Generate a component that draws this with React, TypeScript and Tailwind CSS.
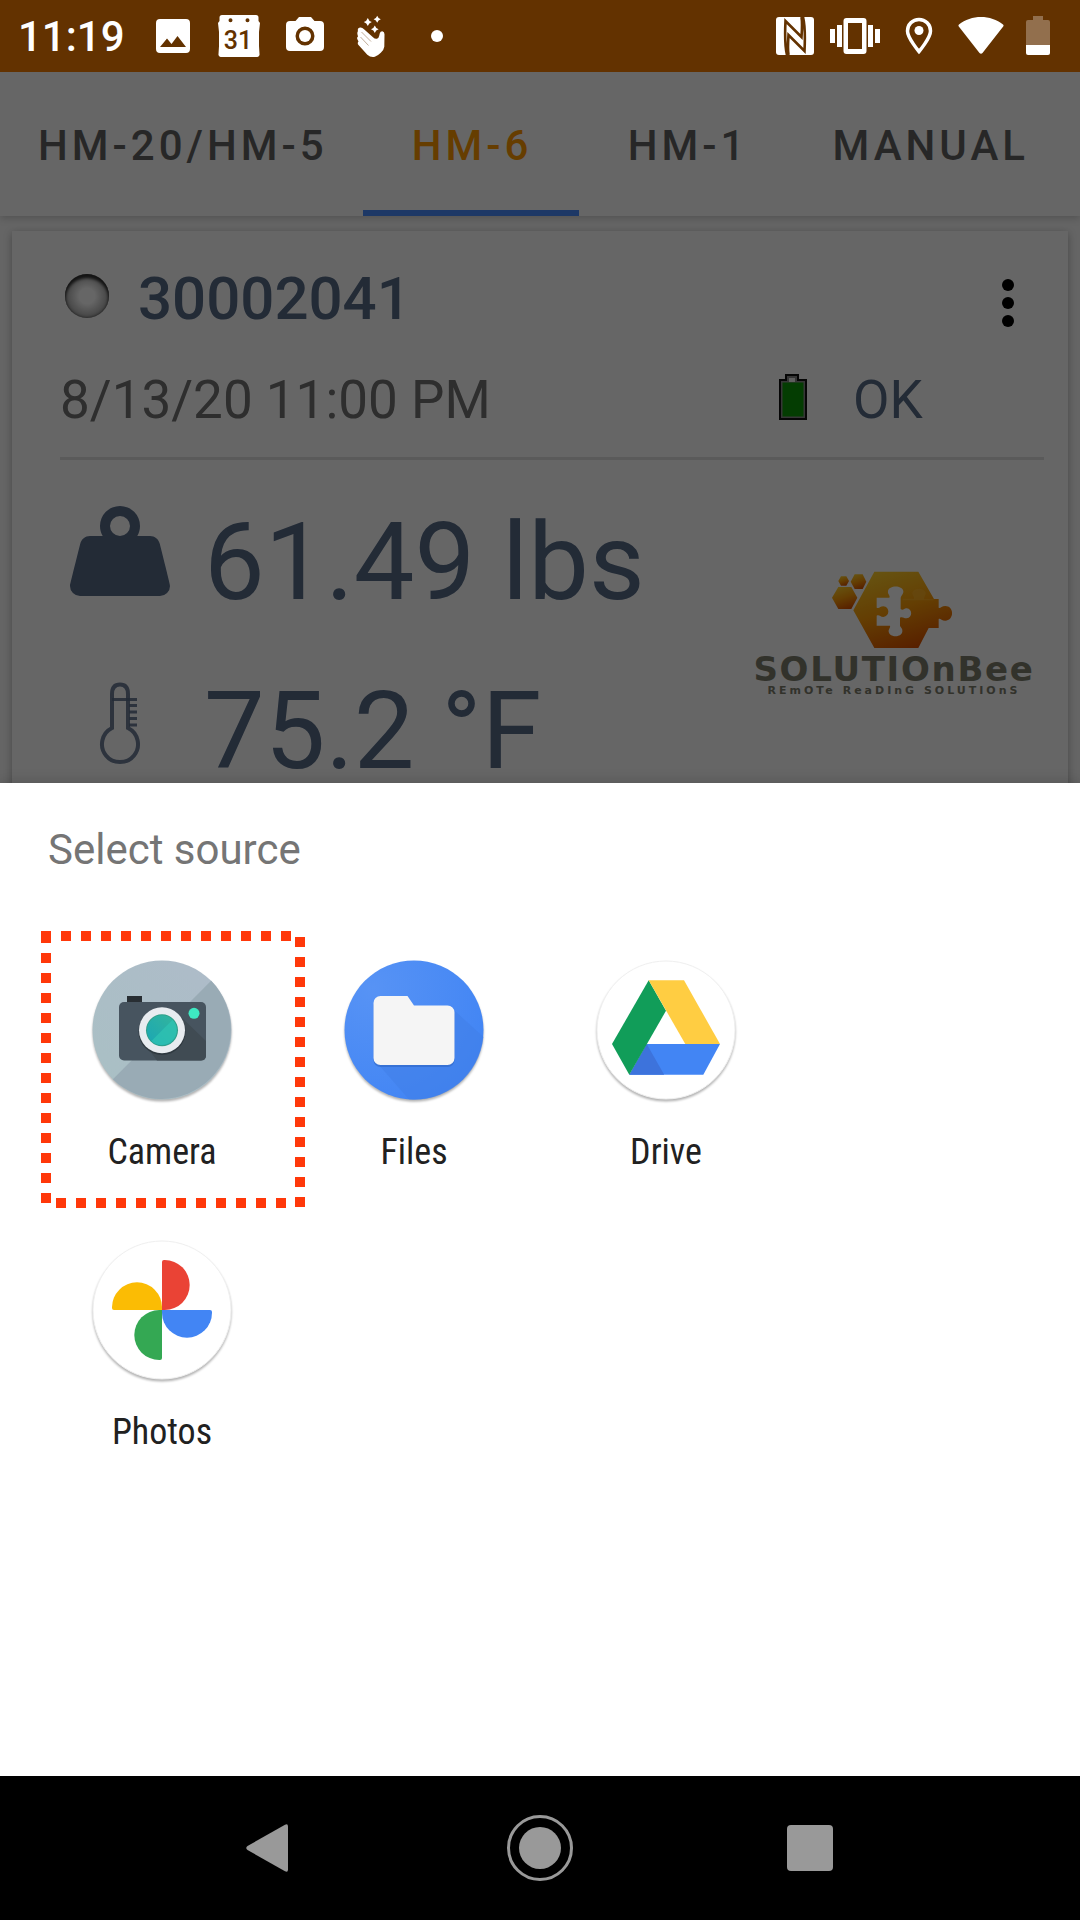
import React, { useState } from 'react'

const TABS = ['HM-20/HM-5', 'HM-6', 'HM-1', 'MANUAL']

const APPS = [
  { name: 'Camera', Icon: CameraAppIcon },
  { name: 'Files', Icon: FilesAppIcon },
  { name: 'Drive', Icon: DriveAppIcon },
  { name: 'Photos', Icon: PhotosAppIcon },
]

function StatusBar() {
  return (
    <header className="flex h-[72px] items-center justify-between bg-[#633200] pl-[18px] pr-[30px] text-white">
      <div className="flex items-center">
        <time className="w-[122px] pt-[2px] text-[42px] font-medium leading-none">11:19</time>
        <StatusSlot>
          <svg viewBox="0 0 34 34" className="size-[34px]" fill="currentColor">
            <path
              fillRule="evenodd"
              d="M4 0h26a4 4 0 0 1 4 4v26a4 4 0 0 1-4 4H4a4 4 0 0 1-4-4V4a4 4 0 0 1 4-4zM4 28h26l-8.500-11-6 8-4.500-5.500z"
            />
          </svg>
        </StatusSlot>
        <StatusSlot>
          <svg viewBox="0 0 42 42" className="size-[42px]">
            <path
              fill="currentColor"
              fillRule="evenodd"
              d="M4 0h34a2.500 2.500 0 0 1 2.500 2.500V6L42 8l-1 9v14l.5 8a2.500 2.500 0 0 1-2.500 3H3a2.500 2.500 0 0 1-2.500-3L1 31V17L0 8l1.500-2V2.500A2.500 2.500 0 0 1 4 0zM12.500 3.300a2 2 0 1 0 0 4 2 2 0 0 0 0-4zM29.500 3.300a2 2 0 1 0 0 4 2 2 0 0 0 0-4z"
            />
            <text x="20" y="34" textAnchor="middle" fontSize="25" fontWeight="500" fill="#633200">
              31
            </text>
          </svg>
        </StatusSlot>
        <StatusSlot>
          <svg viewBox="0 0 38 34" className="mb-1 h-[34px] w-[38px]" fill="currentColor">
            <path
              fillRule="evenodd"
              d="M13 0h12l3.500 4H34a4 4 0 0 1 4 4v22a4 4 0 0 1-4 4H4a4 4 0 0 1-4-4V8a4 4 0 0 1 4-4h5.500zM19 9.500a9.500 9.500 0 1 0 0 19 9.500 9.500 0 0 0 0-19z"
            />
            <circle cx="19" cy="19" r="6" />
          </svg>
        </StatusSlot>
        <StatusSlot>
          <svg viewBox="0 0 28 42" className="h-[42px] w-[28px]" fill="currentColor">
            <path d="M10.800 3q1 3.200 4 4-3 .8-4 4-1-3.200-4-4 3-.8 4-4zM20.200.8q.9 2.800 3.600 3.500-2.700.7-3.600 3.500-.9-2.800-3.600-3.500 2.700-.7 3.600-3.500zM17.800 10.500q1 3 3.800 3.800-2.800.8-3.800 3.800-1-3-3.800-3.800 2.800-.8 3.800-3.800z" />
            <path d="M1 16q-1-3 2-3.500 2.200-.3 4 1.700l9 8q2 2 4 1.500 1.800-.7 2.200-3l.6-2.500q.5-2 2.500-2 2.200.3 2.200 3l-.2 12.500q-.5 3.500-3.500 6-3 3-6 4-4 1-7.500-2L1.500 30q-1.500-2 0-3.500l-1-2q-1-2 .5-3l-.5-2q-.5-2 .5-3.500z" />
            <path d="M4.500 17l9.500 9.500M3.500 22l8 8.500" fill="none" stroke="#633200" strokeWidth="1" opacity=".4" />
          </svg>
        </StatusSlot>
        <StatusSlot>
          <span className="size-3 rounded-full bg-white" />
        </StatusSlot>
      </div>

      <div className="flex items-center gap-[22px]">
        <div className="flex items-center gap-4">
          <svg viewBox="0 0 38 38" className="size-[38px]">
            <rect width="38" height="38" rx="3" fill="currentColor" />
            <path
              d="M11 38C8.500 28 9 14 9.500 4L25.500 20C26 12 26.500 6 25.500 0M27 0C29.500 10 29 24 28.500 34L12.500 18C12 26 11.500 32 12.500 38"
              fill="none"
              stroke="#633200"
              strokeWidth="2.600"
            />
          </svg>
          <svg viewBox="0 0 50 36" className="h-[36px] w-[50px]" fill="currentColor">
            <path
              fillRule="evenodd"
              d="M16.500 0h17a3 3 0 0 1 3 3v30a3 3 0 0 1-3 3h-17a3 3 0 0 1-3-3V3a3 3 0 0 1 3-3zM18 5v26h14V5z"
            />
            <path d="M0 11h5v14H0zM7 7h5v22H7zM38 7h5v22h-5zM45 11h5v14h-5z" />
          </svg>
        </div>
        <svg viewBox="0 0 34 38" className="h-[38px] w-[34px]">
          <path d="M17 2.500c-6.500 0-11.500 5-11.500 11.500C5.500 21 17 34.500 17 34.500S28.500 21 28.500 14c0-6.500-5-11.500-11.500-11.500z" fill="none" stroke="currentColor" strokeWidth="3.500" />
          <circle cx="17" cy="13.500" r="4.500" fill="currentColor" />
        </svg>
        <svg viewBox="0 0 46 38" className="h-[38px] w-[46px]" fill="currentColor">
          <path d="M1 7.500C13-2.500 33-2.500 45 7.500q1 1 .2 2L24.500 36q-1.500 1.500-3 0L.8 9.500q-.8-1 .2-2z" />
        </svg>
        <svg viewBox="0 0 24 40" className="h-[40px] w-[24px]" fill="currentColor">
          <path opacity=".3" d="M7 0h10v4h5a2 2 0 0 1 2 2v23H0V6a2 2 0 0 1 2-2h5z" />
          <path d="M0 29h24v8a2 2 0 0 1-2 2H2a2 2 0 0 1-2-2z" />
        </svg>
      </div>
    </header>
  )
}

function StatusSlot({ children }: { children: React.ReactNode }) {
  return <span className="flex w-[66px] items-center justify-center">{children}</span>
}

function WeightIcon() {
  return (
    <svg viewBox="0 0 24 24" className="mb-[22px] size-[120px]" fill="currentColor">
      <path d="M12 3a4 4 0 0 1 4 4c0 .73-.19 1.410-.54 2H18c.95 0 1.750.67 1.950 1.560C21.960 18.570 22 18.780 22 19a2 2 0 0 1-2 2H4a2 2 0 0 1-2-2c0-.22.040-.43 2.050-8.440C4.250 9.670 5.050 9 6 9h2.540C8.190 8.410 8 7.730 8 7a4 4 0 0 1 4-4m0 2a2 2 0 0 0-2 2 2 2 0 0 0 2 2 2 2 0 0 0 2-2 2 2 0 0 0-2-2z" />
    </svg>
  )
}

function ThermometerIcon() {
  return (
    <svg viewBox="0 0 120 120" className="mb-[22px] size-[120px]" fill="none" stroke="currentColor" strokeWidth="4">
      <path d="M52 68V34q0-9.500 8-9.500t8 9.500v34a18 18 0 1 1-16 0z" opacity=".85" />
      <path d="M52 39.500h25M69 45.500h8M69 52h8M69 58.500h8M69 65h8" strokeWidth="3" opacity=".85" />
    </svg>
  )
}

function SolutionBeeLogo() {
  return (
    <div className="mr-[10px] mt-[94px] flex w-[280px] shrink-0 flex-col items-center self-start whitespace-nowrap font-['DejaVu_Sans',sans-serif] font-bold text-[#7d7d6d]">
      <svg viewBox="398 96 360 232" className="mr-1 h-[78px] w-[120px]">
        <defs>
          <linearGradient id="honey" x1="0.2" y1="0" x2="0.6" y2="1">
            <stop offset="0" stopColor="#ffd02c" />
            <stop offset="0.5" stopColor="#fa9c08" />
            <stop offset="1" stopColor="#dc5200" />
          </linearGradient>
        </defs>
        <g fill="url(#honey)">
          <path d="M425 111h16l8 14-8 14h-16l-8-14z" />
          <path d="M466 105h24l11 22-11 22h-24l-12-22z" />
          <path d="M417 143h39l18 32-18 34h-39l-19-34z" />
          <path d="M525 97h132l47 82h14v26c4 4 8-5 20-5 28 0 26 44 0 44-12 0-16-9-20-5v27h-30l-31 60H525l-63-113z" />
        </g>
        <path
          fill="#fff"
          d="M532 175h38c4-6-6-10-4-20 3-18 43-18 46 0 1 10-8 14-8 22v32c8 6 10-3 18-2 18 2 18 28 0 30-8 1-12-6-20-2v24c4 8 8 8 7 18-3 18-38 18-41 0-1-8 6-12 4-18h-40v-30c8-4 10 4 20 4 20-2 20-30 0-32-10 0-12 8-20 4z"
        />
        <path fill="#ffb62e" opacity=".6" d="M610 178h34c2-6-6-10-5-18 4-16 36-16 40 0 1 8-6 12-4 20h28v3h-93z" />
      </svg>
      <span className="mt-1 text-[34px] leading-[32px] tracking-wider">SOLUTIOnBee</span>
      <span className="text-[11px] leading-[11px] tracking-[3px]">REmOTe ReaDInG SOLUTIOnS</span>
    </div>
  )
}

function ScaleCard() {
  return (
    <article className="mx-3 mt-[15px] bg-white pl-12 pr-6 pt-4 text-[#576b88] shadow-[0_2px_8px_rgba(0,0,0,0.3)]">
      <div className="flex h-[102px] items-center">
        <span className="mb-1 ml-[5px] size-[44px] rounded-full bg-[radial-gradient(circle,#fff_25%,#a5a5a5_72%)] shadow-[inset_0_4px_3px_#333,inset_0_0_3px_#444]" />
        <h1 className="ml-[29px] flex-1 pt-[2px] text-[60px] font-medium leading-none">30002041</h1>
        <button aria-label="More options" className="flex w-[72px] flex-col items-center gap-[6px] pt-[10px]">
          <span className="size-3 rounded-full bg-black" />
          <span className="size-3 rounded-full bg-black" />
          <span className="size-3 rounded-full bg-black" />
        </button>
      </div>
      <div className="flex h-[102px] items-center text-[53px] leading-none">
        <span className="flex-1 text-[#737373]">8/13/20 11:00 PM</span>
        <div className="flex w-[265px] items-center gap-[46px]">
          <svg viewBox="0 0 28 46" className="mb-[6px] h-[46px] w-[28px]" strokeWidth="2">
            <path d="M1 6h6V1h12v5h8v39H1z" fill="#888" stroke="#111" />
            <path d="M3.500 8.500h21v34h-21z" fill="#0b9a05" />
            <path d="M10 4h6v4h-6z" fill="#eee" />
          </svg>
          <span>OK</span>
        </div>
      </div>
      <hr className="mt-[6px] border-t-[3px] border-[#e0e0e0]" />
      <div className="mt-[17px] flex">
        <div className="flex-1 text-[108px] leading-none">
          <div className="flex h-[169px] items-center gap-6">
            <WeightIcon />
            <span>61.49 lbs</span>
          </div>
          <div className="flex h-[169px] items-center gap-6">
            <ThermometerIcon />
            <span>75.2 °F</span>
          </div>
        </div>
        <SolutionBeeLogo />
      </div>
    </article>
  )
}

function CameraAppIcon() {
  return (
    <svg viewBox="0 0 144 144" className="size-36">
      <defs>
        <linearGradient id="lens" x1="0" y1="1" x2="1" y2="0">
          <stop offset="0" stopColor="#1aa6b5" />
          <stop offset="1" stopColor="#34b69b" />
        </linearGradient>
        <linearGradient id="plate" x1="0" y1="1" x2="1" y2="0">
          <stop offset="0" stopColor="#a9c0c4" />
          <stop offset="1" stopColor="#aebbc9" />
        </linearGradient>
      </defs>
      <circle cx="72" cy="72" r="69.500" fill="url(#plate)" />
      <path d="M121.140 22.860a69.500 69.500 0 0 1-98.280 98.280z" fill="#99abb5" />
      <rect x="29" y="44" width="87" height="58.500" rx="5" fill="#47545f" />
      <path d="M37 38h15v6H37z" fill="#282e33" />
      <path d="M88 56l28 27v15a5 5 0 0 1-5 4.500H67L56 88z" fill="#404b53" />
      <circle cx="72" cy="73.500" r="23.500" fill="#2f3940" />
      <circle cx="72" cy="72.300" r="23" fill="#e8ecf0" />
      <circle cx="72" cy="72.300" r="16" fill="#2f9f88" />
      <circle cx="72" cy="72.300" r="15" fill="url(#lens)" />
      <path d="M61.400 82.900L82.600 61.700a15 15 0 0 1-21.200 21.200z" fill="#2fc4b4" opacity=".7" />
      <circle cx="104" cy="55.300" r="5.500" fill="#3ee8c2" />
    </svg>
  )
}

function FilesAppIcon() {
  return (
    <svg viewBox="0 0 144 144" className="size-36">
      <defs>
        <radialGradient id="filesBlue" cx="0.2" cy="0.2" r="0.9">
          <stop offset="0" stopColor="#5793f5" />
          <stop offset="1" stopColor="#4285f4" />
        </radialGradient>
      </defs>
      <circle cx="72" cy="72" r="69.500" fill="url(#filesBlue)" />
      <path d="M112 52l29.500 27A69.500 69.500 0 0 1 67 141.500L36 106z" fill="#3f7ee6" opacity=".5" />
      <path d="M38.500 40h27l7 9h33a7 7 0 0 1 7 7v46a7 7 0 0 1-7 7h-67a7 7 0 0 1-7-7V47a7 7 0 0 1 7-7z" fill="#2f66c4" opacity=".6" />
      <path d="M38.500 38h27l6.500 9.500h33.500a7 7 0 0 1 7 7v45.500a7 7 0 0 1-7 7h-67a7 7 0 0 1-7-7V45a7 7 0 0 1 7-7z" fill="#f5f5f5" />
    </svg>
  )
}

function DriveAppIcon() {
  return (
    <svg viewBox="0 0 144 144" className="size-36">
      <circle cx="72" cy="72" r="69" fill="#fff" stroke="#efefef" />
      <path d="M52.700 86H126l-16.700 30.700h-74z" fill="#4285f4" />
      <path d="M52.700 86l17.500 30.700H35.300z" fill="#3d73dc" />
      <path d="M54.700 22.300L72 52.700l-36.700 64L18 86z" fill="#119d59" />
      <path d="M54.700 22.300H90L126 86H91.300z" fill="#ffcd42" />
    </svg>
  )
}

function PhotosAppIcon() {
  const petal = 'M72 24a2 2 0 0 1 2-2h.7a25 25 0 0 1 0 50H72z'
  return (
    <svg viewBox="0 0 144 144" className="size-36">
      <circle cx="72" cy="72" r="69" fill="#fff" stroke="#efefef" />
      <path d={petal} fill="#ea4335" />
      <path d={petal} fill="#4285f4" transform="rotate(90 72 72)" />
      <path d={petal} fill="#34a853" transform="rotate(180 72 72)" />
      <path d={petal} fill="#fbbc04" transform="rotate(270 72 72)" />
    </svg>
  )
}

// Dotted marker around the app to tap
function Highlight() {
  return (
    <svg
      viewBox="0 0 264 277"
      className="pointer-events-none absolute left-[5px] top-0 h-[277px] w-[264px]"
      stroke="#ff380a"
      strokeWidth="10"
      strokeDasharray="10 10"
    >
      <path d="M0 5h250" />
      <path d="M5 2v270" />
      <path d="M259 6v270" />
      <path d="M15 272h230" />
    </svg>
  )
}

function SourceSheet() {
  return (
    <section className="relative -mt-8 flex-1 bg-white px-9 shadow-[0_-2px_12px_rgba(0,0,0,0.15)]">
      <h2 className="px-3 text-[42px] leading-[134px] text-[#757575]">Select source</h2>
      <div className="grid w-3/4 grid-cols-3 pt-[14px]">
        {APPS.map(({ name, Icon }) => (
          <div key={name} className="relative">
            <button className="flex h-[280px] w-full flex-col items-center pt-[27px]">
              <span className="drop-shadow-[0_2px_1px_rgba(0,0,0,0.3)]">
                <Icon />
              </span>
              <span className="mt-[29px] font-['Roboto_Condensed','Roboto',sans-serif] text-[36px] leading-[42px] text-[#212121]">
                {name}
              </span>
            </button>
            {name === 'Camera' && <Highlight />}
          </div>
        ))}
      </div>
    </section>
  )
}

function NavBar() {
  return (
    <nav className="relative grid h-36 grid-cols-3 bg-black px-[135px] text-[#999]">
      <button aria-label="Back" className="flex items-center justify-center">
        <svg viewBox="0 0 48 48" className="size-12" fill="currentColor">
          <path d="M1.500 22L39 .7Q42-.8 42 2.500v43q0 3.300-3 1.800L1.500 26q-2.500-2 0-4z" />
        </svg>
      </button>
      <button aria-label="Home" className="flex items-center justify-center">
        <span className="flex size-[66px] items-center justify-center rounded-full border-[3px] border-[#999]">
          <span className="size-[42px] rounded-full bg-[#999]" />
        </span>
      </button>
      <button aria-label="Recent apps" className="flex items-center justify-center">
        <span className="size-[46px] rounded-[4px] bg-[#999]" />
      </button>
    </nav>
  )
}

export default function App() {
  const [activeTab, setActiveTab] = useState('HM-6')

  return (
    <div className="flex min-h-screen flex-col bg-white font-['Roboto',sans-serif]">
      <StatusBar />
      <main className="relative overflow-hidden bg-[#fcfcfc]">
        <div role="tablist" className="flex h-36 bg-white shadow-[0_2px_8px_rgba(0,0,0,0.2)]">
          {TABS.map((tab) => (
            <button
              key={tab}
              role="tab"
              aria-selected={tab === activeTab}
              onClick={() => setActiveTab(tab)}
              className={`min-w-[216px] shrink-0 border-b-[6px] pl-[38px] pr-[35px] pt-2 text-[42px] font-medium tracking-[4px] ${
                tab === activeTab ? 'border-[#4a8cff] text-[#ff9900]' : 'border-transparent text-[#626262]'
              }`}
            >
              {tab}
            </button>
          ))}
        </div>
        <ScaleCard />
        <div className="absolute inset-0 bg-black/60" />
      </main>
      <SourceSheet />
      <NavBar />
    </div>
  )
}
